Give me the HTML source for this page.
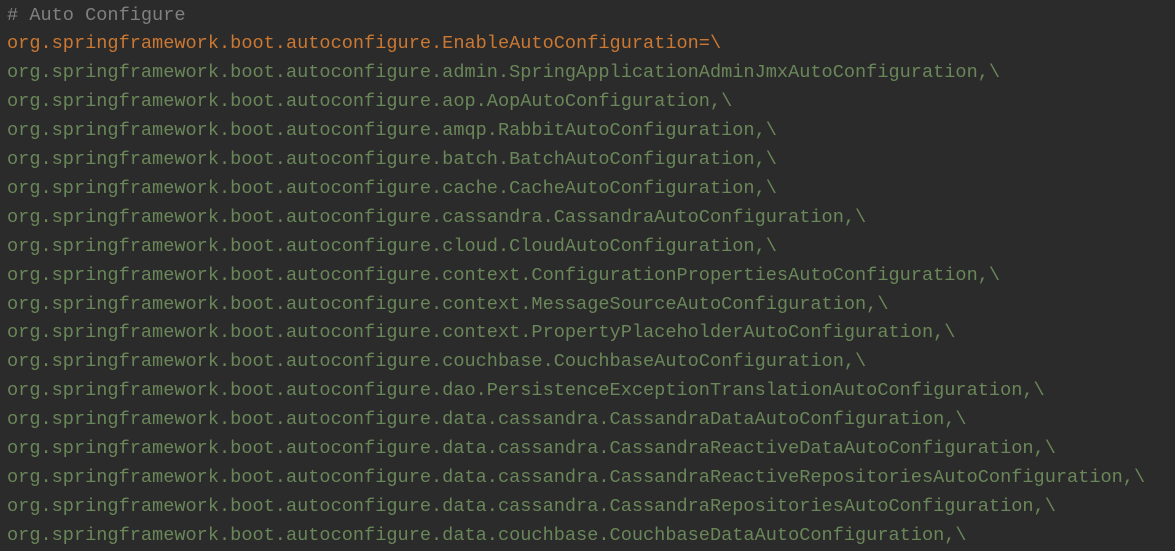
<!DOCTYPE html>
<html><head><meta charset="utf-8"><style>
html,body{margin:0;padding:0;background:#2b2b2b;width:1175px;height:548px;overflow:hidden}
pre{margin:0;position:absolute;left:7px;top:1.5px;font-family:"Liberation Mono",monospace;font-size:18.6px;line-height:28.9px;color:#6a8759;white-space:pre}
.c{color:#808080}.k{color:#cc7832}
</style></head><body><pre><span class="c"># Auto Configure</span>
<span class="k">org.springframework.boot.autoconfigure.EnableAutoConfiguration=\</span>
org.springframework.boot.autoconfigure.admin.SpringApplicationAdminJmxAutoConfiguration,\
org.springframework.boot.autoconfigure.aop.AopAutoConfiguration,\
org.springframework.boot.autoconfigure.amqp.RabbitAutoConfiguration,\
org.springframework.boot.autoconfigure.batch.BatchAutoConfiguration,\
org.springframework.boot.autoconfigure.cache.CacheAutoConfiguration,\
org.springframework.boot.autoconfigure.cassandra.CassandraAutoConfiguration,\
org.springframework.boot.autoconfigure.cloud.CloudAutoConfiguration,\
org.springframework.boot.autoconfigure.context.ConfigurationPropertiesAutoConfiguration,\
org.springframework.boot.autoconfigure.context.MessageSourceAutoConfiguration,\
org.springframework.boot.autoconfigure.context.PropertyPlaceholderAutoConfiguration,\
org.springframework.boot.autoconfigure.couchbase.CouchbaseAutoConfiguration,\
org.springframework.boot.autoconfigure.dao.PersistenceExceptionTranslationAutoConfiguration,\
org.springframework.boot.autoconfigure.data.cassandra.CassandraDataAutoConfiguration,\
org.springframework.boot.autoconfigure.data.cassandra.CassandraReactiveDataAutoConfiguration,\
org.springframework.boot.autoconfigure.data.cassandra.CassandraReactiveRepositoriesAutoConfiguration,\
org.springframework.boot.autoconfigure.data.cassandra.CassandraRepositoriesAutoConfiguration,\
org.springframework.boot.autoconfigure.data.couchbase.CouchbaseDataAutoConfiguration,\</pre></body></html>
